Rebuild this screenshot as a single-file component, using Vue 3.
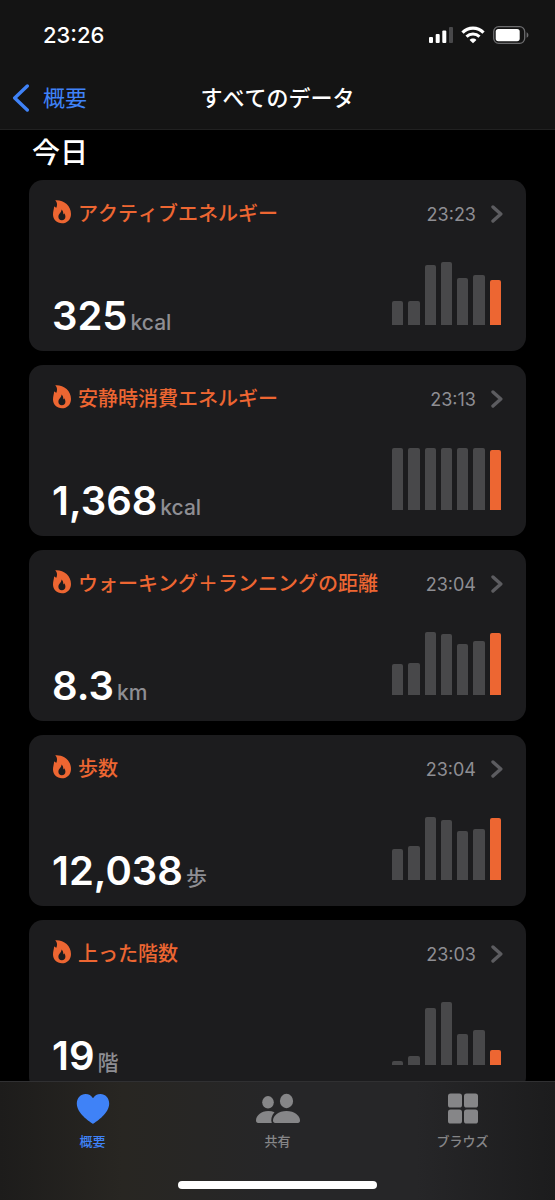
<template>
  <div class="app">
    <header class="top">
      <div class="status">
        <span class="clock">23:26</span>
        <div class="status-icons">
          <svg width="24" height="18" viewBox="0 0 24 18" aria-hidden="true">
            <rect x="0" y="11" width="4" height="6" rx="1" fill="#fff" />
            <rect x="6.7" y="8" width="4" height="9" rx="1" fill="#fff" />
            <rect x="13.3" y="4.5" width="4" height="12.5" rx="1" fill="#fff" />
            <rect x="20" y="1" width="4" height="16" rx="1" fill="#48484a" />
          </svg>
          <svg width="24" height="18" viewBox="0 0 24 18" fill="none" stroke="#fff" aria-hidden="true">
            <path d="M1.5 6.6C7.4 0.6 16.6 0.6 22.5 6.6" stroke-width="3.2" />
            <path d="M5.5 10.7C9.2 7.1 14.8 7.1 18.5 10.7" stroke-width="3" />
            <path d="M12 17.3L8.6 13.9C10.4 12.1 13.6 12.1 15.4 13.9Z" fill="#fff" stroke="none" />
          </svg>
          <svg width="36" height="18" viewBox="0 0 36 18" aria-hidden="true">
            <rect x="0.7" y="0.7" width="31" height="16.6" rx="5" fill="none" stroke="#6c6c6e" stroke-width="1.3" />
            <rect x="2.7" y="2.9" width="24" height="12.3" rx="2.6" fill="#fff" />
            <path d="M33.6 6.2C36 7.2 36 10.8 33.6 11.8Z" fill="#6c6c6e" />
          </svg>
        </div>
      </div>
      <nav class="nav">
        <button class="back" type="button">
          <svg width="18" height="28" viewBox="0 0 18 28" aria-hidden="true">
            <path d="M15.3 2L2.7 14L15.3 26" fill="none" stroke="currentColor" stroke-width="3.4" stroke-linecap="round" stroke-linejoin="round" />
          </svg>
          概要
        </button>
        <h1>すべてのデータ</h1>
      </nav>
    </header>

    <main class="content">
      <h2>今日</h2>
      <a v-for="item in items" :key="item.title" class="card" href="#">
        <div class="card-head">
          <svg class="flame" width="20" height="24" viewBox="0 0 20 24" aria-hidden="true">
            <path
              fill="currentColor"
              fill-rule="evenodd"
              d="M3.2 0.3C11.5 -0.3 19 5.4 19 14C19 19.6 15.2 23.3 10 23.3C4.8 23.3 1 19.8 1 14.6C1 11.4 2 9.4 2.1 6.6C2.9 6.8 3.7 7.3 4.1 8C5.5 5.6 5.4 2.6 3.2 0.3ZM9.4 9.6C9.8 12.4 6.4 13.8 6.4 16.8C6.4 18.8 7.8 20.2 9.8 20.2C12 20.2 13.4 18.8 13.4 16.7C13.4 15.4 12.9 14.2 12.1 13.3C12 14 11.7 14.4 11.3 14.6C11.5 12.6 10.9 10.7 9.4 9.6Z"
            />
          </svg>
          <h3>{{ item.title }}</h3>
          <time>{{ item.time }}</time>
          <svg class="arrow" width="12" height="18" viewBox="0 0 12 18" aria-hidden="true">
            <path d="M2 2L9.8 9L2 16" fill="none" stroke="currentColor" stroke-width="3.4" stroke-linecap="round" stroke-linejoin="round" />
          </svg>
        </div>
        <div class="card-body">
          <p class="reading">
            <span class="value">{{ item.value }}</span>
            <span class="unit">{{ item.unit }}</span>
          </p>
          <div class="chart">
            <span v-for="(bar, i) in item.bars" :key="i" class="bar" :style="{ height: bar + 'px' }"></span>
          </div>
        </div>
      </a>
    </main>

    <footer class="tabs">
      <nav class="tab-list">
        <button class="tab active" type="button">
          <svg width="34" height="32" viewBox="0 0 34 32" aria-hidden="true">
            <path fill="currentColor" d="M17 31C13 28.2 0.8 20.5 0.8 10.6C0.8 5 4.6 1 9.6 1C12.8 1 15.4 2.6 17 5.2C18.6 2.6 21.2 1 24.4 1C29.4 1 33.2 5 33.2 10.6C33.2 20.5 21 28.2 17 31Z" />
          </svg>
          <span>概要</span>
        </button>
        <button class="tab" type="button">
          <svg width="46" height="32" viewBox="0 0 46 32" fill="currentColor" aria-hidden="true">
            <ellipse cx="13" cy="9.3" rx="5.8" ry="6.2" />
            <ellipse cx="31.5" cy="8" rx="6.6" ry="7.2" />
            <path d="M19.5 19.2C17.7 18.4 15.6 18 13.3 18C6 18 1 22.8 1 27.6C1 29.2 1.8 30 3.2 30H16.8C15.5 26.8 16.6 22.4 19.5 19.2Z" />
            <path d="M31.5 18C23.4 18 18 22.8 18 27.6C18 29.2 18.8 30 20.2 30H42.8C44.2 30 45 29.2 45 27.6C45 22.8 39.6 18 31.5 18Z" />
          </svg>
          <span>共有</span>
        </button>
        <button class="tab" type="button">
          <svg width="30" height="32" viewBox="0 0 30 32" fill="currentColor" aria-hidden="true">
            <rect x="0" y="0.5" width="14" height="14" rx="2.6" />
            <rect x="16" y="0.5" width="14" height="14" rx="2.6" />
            <rect x="0" y="16.5" width="14" height="14" rx="2.6" />
            <rect x="16" y="16.5" width="14" height="14" rx="2.6" />
          </svg>
          <span>ブラウズ</span>
        </button>
      </nav>
      <div class="home-bar"></div>
    </footer>
  </div>
</template>

<script setup>
// bar heights are pixels, the last bar is today
// \uFF0B is the full-width plus sign
const items = [
  { title: 'アクティブエネルギー', time: '23:23', value: '325', unit: 'kcal', bars: [24, 24, 60, 63, 47, 50, 45] },
  { title: '安静時消費エネルギー', time: '23:13', value: '1,368', unit: 'kcal', bars: [62, 62, 62, 62, 62, 62, 60] },
  { title: 'ウォーキング\uFF0Bランニングの距離', time: '23:04', value: '8.3', unit: 'km', bars: [31, 32, 63, 61, 51, 54, 62] },
  { title: '歩数', time: '23:04', value: '12,038', unit: '歩', bars: [31, 34, 63, 60, 49, 51, 62] },
  { title: '上った階数', time: '23:03', value: '19', unit: '階', bars: [4, 9, 57, 63, 31, 35, 15] }
]
</script>

<style>
body {
  background: #000;
}
</style>

<style scoped>
.app {
  display: flex;
  flex-direction: column;
  height: 100vh;
  background: #000;
  color: #fff;
  font-family: Inter, "Noto Sans CJK JP", sans-serif;
}

h1,
h2,
h3,
p {
  margin: 0;
}

h1,
h3 {
  font-weight: 500;
  font-kerning: none;
}

button {
  padding: 0;
  border: 0;
  background: none;
  font-family: inherit;
  cursor: pointer;
}

.top {
  background: #141414;
  border-bottom: 1px solid #212121;
}

.status {
  display: flex;
  align-items: center;
  justify-content: space-between;
  height: 70px;
  padding: 0 26px 0 43px;
}

.clock {
  font-size: 22px;
  font-weight: 500;
}

.status-icons {
  display: flex;
  align-items: center;
  gap: 8px;
}

.nav {
  display: grid;
  grid-template-columns: 1fr auto 1fr;
  align-items: center;
  height: 56px;
  padding: 0 12px 3px;
}

.back {
  display: flex;
  align-items: center;
  gap: 13px;
  color: #3f82f7;
  font-size: 22px;
  line-height: 32px;
}

h1 {
  font-size: 22px;
  line-height: 32px;
}

.content {
  flex: 1;
  min-height: 0;
  overflow: hidden;
  padding: 0 29px;
}

h2 {
  padding: 0 3px;
  margin-bottom: 4px;
  font-size: 28px;
  font-weight: 500;
  line-height: 46px;
}

.card {
  display: flex;
  flex-direction: column;
  justify-content: space-between;
  height: 171px;
  box-sizing: border-box;
  margin-bottom: 14px;
  padding: 19px 23px 8px;
  border-radius: 14px;
  background: #1c1c1e;
  color: inherit;
  text-decoration: none;
}

.card-head {
  display: flex;
  align-items: center;
  height: 30px;
}

.flame {
  margin-bottom: 4px;
  color: #ed6632;
}

h3 {
  flex: 1;
  margin-left: 6px;
  color: #ed6632;
  font-size: 20px;
  line-height: 30px;
}

time {
  color: #8e8e93;
  font-size: 18px;
}

.arrow {
  margin-left: 15px;
  color: #5c5c60;
}

.card-body {
  display: flex;
  align-items: flex-end;
  justify-content: space-between;
}

.reading {
  display: flex;
  align-items: baseline;
  gap: 3px;
  line-height: 40px;
}

.value {
  font-size: 40px;
  font-weight: 600;
}

.unit {
  color: #8e8e93;
  font-size: 21px;
  font-weight: 500;
}

.chart {
  display: flex;
  align-items: flex-end;
  gap: 5px;
  width: 109px;
  padding: 0 2px 18px 0;
}

.bar {
  flex: 1;
  border-radius: 2px 2px 0 0;
  background: #48484a;
}

.bar:last-child {
  background: #ed6632;
}

.tabs {
  display: flex;
  flex-direction: column;
  align-items: center;
  justify-content: space-between;
  height: 119px;
  box-sizing: border-box;
  padding: 11px 0;
  border-top: 1px solid #303032;
  background: linear-gradient(90deg, #1d1c1b 0%, #282622 22%, #262628 50%, #262628 75%, #1c1c1d 100%);
}

.tab-list {
  display: grid;
  grid-template-columns: repeat(3, 1fr);
  width: 100%;
}

.tab {
  display: flex;
  flex-direction: column;
  align-items: center;
  gap: 6px;
  color: #868688;
  font-size: 13px;
  font-weight: 500;
  line-height: 20px;
}

.tab.active {
  color: #3f82f7;
}

.home-bar {
  width: 36%;
  height: 8px;
  border-radius: 4px;
  background: #fff;
}
</style>
